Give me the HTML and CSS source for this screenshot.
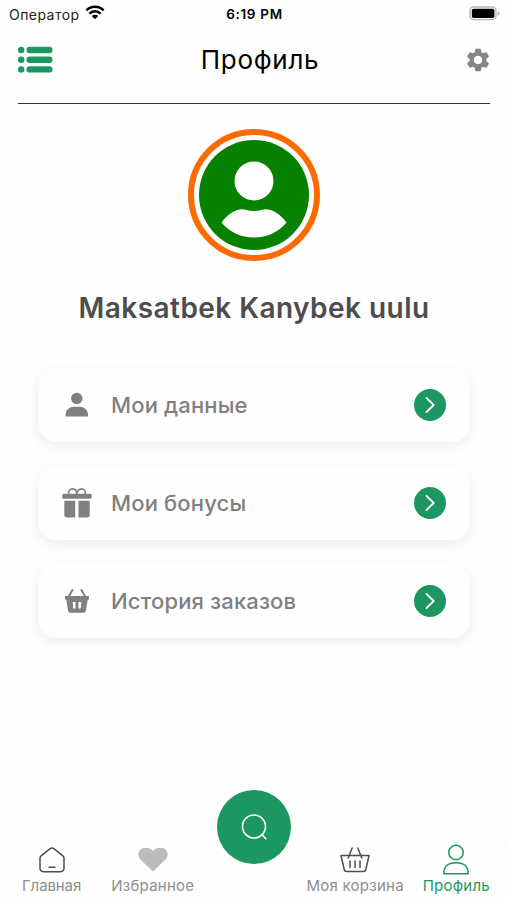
FILE: index.html
```html
<!DOCTYPE html>
<html lang="ru">
  <head>
    <meta charset="UTF-8" />
    <meta name="viewport" content="width=device-width, initial-scale=1.0" />
    <title>Профиль</title>
    <link rel="stylesheet" href="styles.css">
  </head>

  <body>
    <div class="screen">
      <!-- Status bar -->
      <div class="status-bar">
        <div class="carrier">
          <span>Оператор</span>
          <svg width="20" height="15" viewBox="0 0 20 15" fill="none" stroke="#000" stroke-width="2.5">
            <path d="M1.4 5.3a12.2 12.2 0 0 1 17.2 0" />
            <path d="M4.4 8.6a8 8 0 0 1 11.2 0" />
            <path d="M10 14.2 6.8 11.1a4.6 4.6 0 0 1 6.4 0z" fill="#000" stroke="none" />
          </svg>
        </div>
        <span class="time">6:19 PM</span>
        <svg class="battery" width="31" height="15" viewBox="0 0 31 15">
          <rect x="1" y="1" width="26" height="12.6" rx="3.6" fill="#fff" stroke="#b5b5b5" stroke-width="1.4" />
          <rect x="2.8" y="2.7" width="22.6" height="9.3" rx="1.8" fill="#000" />
          <path d="M28.6 5v4.8q2-.8 2-2.4t-2-2.4z" fill="#b5b5b5" />
        </svg>
      </div>

      <!-- Header -->
      <header class="header">
        <svg width="35" height="28" viewBox="0 0 35 28" fill="#1d9761">
          <circle cx="3.2" cy="4" r="3.2" />
          <circle cx="3.2" cy="13.7" r="3.2" />
          <circle cx="3.2" cy="23.4" r="3.2" />
          <rect x="8.5" y="0.8" width="26" height="6.4" rx="3.2" />
          <rect x="8.5" y="10.5" width="26" height="6.4" rx="3.2" />
          <rect x="8.5" y="20.2" width="26" height="6.4" rx="3.2" />
        </svg>
        <h1>Профиль</h1>
        <svg class="gear" width="28" height="28" viewBox="0 0 24 24" fill="#858585">
          <path d="M19.14 12.94c.04-.3.06-.61.06-.94 0-.32-.02-.64-.07-.94l2.03-1.58a.49.49 0 0 0 .12-.61l-1.92-3.32a.488.488 0 0 0-.59-.22l-2.39.96c-.5-.38-1.03-.7-1.62-.94l-.36-2.54a.484.484 0 0 0-.48-.41h-3.84c-.24 0-.43.17-.47.41l-.36 2.54c-.59.24-1.13.57-1.62.94l-2.39-.96c-.22-.08-.47 0-.59.22L2.74 8.87c-.12.21-.08.47.12.61l2.03 1.58c-.05.3-.09.63-.09.94s.02.64.07.94l-2.03 1.58a.49.49 0 0 0-.12.61l1.92 3.32c.12.22.37.29.59.22l2.39-.96c.5.38 1.03.7 1.62.94l.36 2.54c.05.24.24.41.48.41h3.84c.24 0 .44-.17.47-.41l.36-2.54c.59-.24 1.13-.56 1.62-.94l2.39.96c.22.08.47 0 .59-.22l1.92-3.32c.12-.22.07-.47-.12-.61l-2.01-1.58zM12 15.6c-1.98 0-3.6-1.62-3.6-3.6s1.62-3.6 3.6-3.6 3.6 1.62 3.6 3.6-1.62 3.6-3.6 3.6z" />
        </svg>
      </header>

      <!-- Avatar and name -->
      <main class="profile">
        <svg class="avatar" width="132" height="132" viewBox="0 0 132 132">
          <circle cx="66" cy="66" r="63" fill="#fff" stroke="#ff6a00" stroke-width="6" />
          <circle cx="66" cy="66" r="55" fill="#088000" />
          <circle cx="66" cy="52" r="19.5" fill="#fff" />
          <path d="M33.5 93.5C39 86 47 80.3 54 80.2c4 0 7 1.8 12 1.8s8-1.8 12-1.8c7 .1 15 5.8 20.5 13.3C91 102.500 79.500 108.500 66 108.500S41 102.500 33.500 93.500z" fill="#fff" />
        </svg>
        <h2>Maksatbek Kanybek uulu</h2>
      </main>

      <!-- Menu cards -->
      <div class="menu">
        <a class="card">
          <svg class="card-icon" width="30" height="30" viewBox="0 0 30 30" fill="#808080">
            <circle cx="14.8" cy="8.500" r="5.700" />
            <path d="M3.600 26.500v-1.700c0-5 4.200-8 8.200-8h6c4 0 8.200 3 8.200 8v1.700z" />
          </svg>
          <span class="card-title">Мои данные</span>
          <svg width="32" height="32" viewBox="0 0 32 32" fill="none">
            <circle cx="16" cy="16" r="16" fill="#1d9761" />
            <path d="M12.500 9 19.700 16l-7.200 7" stroke="#fff" stroke-width="1.800" stroke-linecap="round" stroke-linejoin="round" />
          </svg>
        </a>
        <a class="card">
          <svg class="card-icon" width="30" height="30" viewBox="0 0 30 30" fill="#808080">
            <rect x="0.300" y="5.800" width="29.400" height="5" rx="1.500" />
            <path d="M2.300 12.800h10.900v16.700H5q-2.700 0-2.700-2.700zM16.500 12.800h11.200v14q0 2.700-2.700 2.700h-8.500z" />
            <path d="M6.800 6.200C6 2.600 8 .9 10.500.9S14.800 3 14.800 6.200C14.800 3 17 .9 19.500.9s4.500 1.700 3.700 5.300" fill="none" stroke="#808080" stroke-width="1.600" />
          </svg>
          <span class="card-title">Мои бонусы</span>
          <svg width="32" height="32" viewBox="0 0 32 32" fill="none">
            <circle cx="16" cy="16" r="16" fill="#1d9761" />
            <path d="M12.500 9 19.700 16l-7.200 7" stroke="#fff" stroke-width="1.800" stroke-linecap="round" stroke-linejoin="round" />
          </svg>
        </a>
        <a class="card">
          <svg class="card-icon" width="30" height="30" viewBox="0 0 30 30">
            <path d="M6.500 11 10.500 4M23.500 11l-4-7" stroke="#808080" stroke-width="2" stroke-linecap="round" />
            <path fill="#808080" fill-rule="evenodd" d="M3.900 10h22.200q1.200 0 1 1.200l-.4 2q-.2.900-1 .9l-1.900 10.800q-.3 1.800-2 1.800H8.200q-1.700 0-2-1.800L4.300 14.100q-.8 0-1-.9l-.4-2q-.2-1.200 1-1.200zM10.700 16l.5 6.400h2.300V16zM16.500 16v6.400h2.300l.5-6.400z" />
          </svg>
          <span class="card-title">История заказов</span>
          <svg width="32" height="32" viewBox="0 0 32 32" fill="none">
            <circle cx="16" cy="16" r="16" fill="#1d9761" />
            <path d="M12.500 9 19.700 16l-7.200 7" stroke="#fff" stroke-width="1.800" stroke-linecap="round" stroke-linejoin="round" />
          </svg>
        </a>
      </div>

      <!-- Bottom navigation -->
      <nav class="tab-bar">
        <svg class="tab-edge" width="507" height="76" viewBox="0 0 507 76" fill="none" stroke="#fbfbfb" stroke-width="1.500">
          <path d="M0 27Q2 2 24 2h164q12 0 20-9M299-7q8 9 20 9h164q22 0 24 25" />
        </svg>
        <a class="tab">
          <svg width="30" height="32" viewBox="0 0 30 32" fill="none" stroke="#4d4d4d" stroke-width="1.500" stroke-linecap="round" stroke-linejoin="round">
            <path d="M3 14.300q0-1.600 1.300-2.700l8.500-6.700q2.200-1.700 4.400 0l8.500 6.700q1.300 1.100 1.300 2.700v9.800q0 3.600-3.600 3.600H6.600Q3 27.700 3 24.100z" />
            <path d="M12 23.200h6" />
          </svg>
          <span class="home">Главная</span>
        </a>
        <a class="tab">
          <svg width="30" height="32" viewBox="0 0 30 32" fill="#bcbcbc">
            <path d="M15 27.600 2.900 16C-.3 12.700-.3 8.400 2 6 5.200 2.700 11.700 3.400 15 7c3.300-3.600 9.800-4.300 13-1 2.300 2.400 2.300 6.700-.9 10z" />
          </svg>
          <span>Избранное</span>
        </a>
        <div class="tab tab-center">
          <button class="search" aria-label="Поиск">
            <svg width="30" height="30" viewBox="0 0 30 30" fill="none" stroke="#fff" stroke-width="1.600" stroke-linecap="round">
              <circle cx="15" cy="14.500" r="11.500" />
              <path d="m23.200 22.700 3.600 4" />
            </svg>
          </button>
        </div>
        <a class="tab">
          <svg width="30" height="32" viewBox="0 0 30 32" fill="none" stroke="#4d4d4d" stroke-width="1.500" stroke-linecap="round" stroke-linejoin="round">
            <path d="M8.200 14 12.200 4M21.800 14 17.800 4" />
            <path d="M1 11.500h28l-3.200 14q-.5 2-2.500 2H6.700q-2 0-2.500-2z" />
            <path d="M10 17v6.500M15 17v6.500M20 17v6.500" />
          </svg>
          <span>Моя корзина</span>
        </a>
        <a class="tab active">
          <svg width="30" height="32" viewBox="0 0 30 32" fill="none" stroke="#1d9761" stroke-width="1.500" stroke-linejoin="round">
            <circle cx="15" cy="8.500" r="7.200" />
            <path d="M2.800 29.700q-.2-11 12.200-11t12.200 11z" />
          </svg>
          <span>Профиль</span>
        </a>
      </nav>
    </div>
  </body>
</html>
```
FILE: styles.css
```css
body {
  margin: 0;
  background: #fefefe;
  font-family: Inter, "Liberation Sans", sans-serif;
}

.screen {
  width: 507px;
  height: 900px;
  overflow: hidden;
  display: flex;
  flex-direction: column;
}

/* Status bar */
.status-bar {
  height: 28px;
  padding: 0 7px 0 9px;
  display: grid;
  grid-template-columns: 1fr auto 1fr;
  align-items: center;
  font-size: 14px;
  color: #000;
}

.carrier {
  display: flex;
  align-items: center;
  gap: 5px;
  letter-spacing: 0.45px;
  color: #222;
}

.carrier svg {
  margin-top: -3px;
}

.time {
  font-size: 13.5px;
  font-weight: 600;
  letter-spacing: 0.7px;
}

.battery {
  justify-self: end;
  margin-top: -1px;
}

/* Header */
.header {
  height: 75px;
  margin: 0 17px 0 18px;
  border-bottom: 1px solid #333;
  display: grid;
  grid-template-columns: 1fr auto 1fr;
  align-items: center;
}

.header > svg {
  margin-top: -12px;
}

.header h1 {
  margin: -12px -6px 0 6px;
  font-size: 26px;
  line-height: 32px;
  font-weight: 400;
  letter-spacing: 0.7px;
  color: #000;
}

.gear {
  justify-self: end;
  margin-right: -2px;
}

/* Profile */
.profile {
  display: flex;
  flex-direction: column;
  align-items: center;
  padding-top: 25px;
}

.profile h2 {
  margin: 29px 0 0 1px;
  font-size: 28px;
  line-height: 36px;
  font-weight: 600;
  letter-spacing: 0.46px;
  color: #4d4d4d;
}

/* Menu */
.menu {
  display: flex;
  flex-direction: column;
  gap: 23.7px;
  margin: 42.4px 37px 0 38px;
}

.card {
  box-sizing: border-box;
  height: 74px;
  padding: 0 24px;
  border-radius: 18px;
  background: #fefefe;
  box-shadow: 0 4px 12px rgba(0, 0, 0, 0.07);
  display: flex;
  align-items: center;
}

.card-title {
  flex: 1;
  margin-left: 19px;
  font-size: 22px;
  font-weight: 500;
  letter-spacing: 0.15px;
  color: #808080;
}

/* Bottom navigation */
.tab-bar {
  position: relative;
  height: 75px;
  margin-top: auto;
  padding-left: 1px;
  display: grid;
  grid-template-columns: repeat(5, 101.2px);
}

.tab-edge {
  position: absolute;
  top: 0;
  left: 0;
  overflow: visible;
}

.tab {
  display: flex;
  flex-direction: column;
  align-items: center;
  padding-top: 19px;
  font-size: 15px;
  line-height: 20px;
  letter-spacing: 0.25px;
  white-space: nowrap;
  color: #8e8e8e;
}

.tab .home {
  letter-spacing: -0.1px;
}

.tab-center {
  padding-top: 0;
}

.search {
  width: 74px;
  height: 74px;
  flex-shrink: 0;
  margin-top: -35px;
  padding: 0;
  border: none;
  border-radius: 50%;
  background: #1d9761;
  display: flex;
  align-items: center;
  justify-content: center;
}

.active {
  color: #1d9761;
}
```
